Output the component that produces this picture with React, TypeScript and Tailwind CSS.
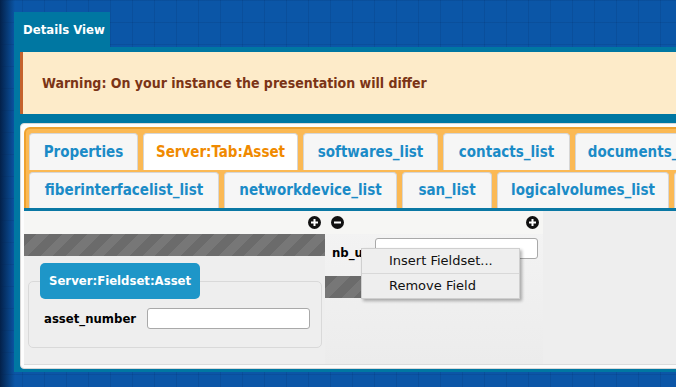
import React from 'react';

const ROW_ONE = [
  { label: 'Properties', w: 109 },
  { label: 'Server:Tab:Asset', w: 155, active: true },
  { label: 'softwares_list', w: 135 },
  { label: 'contacts_list', w: 127 },
  { label: 'documents_list', w: 140 },
];

const ROW_TWO = [
  { label: 'fiberinterfacelist_list', w: 190 },
  { label: 'networkdevice_list', w: 173 },
  { label: 'san_list', w: 90 },
  { label: 'logicalvolumes_list', w: 172 },
  { label: 'physicalinterface_list', w: 180 },
];

function Tab({ label, w, active }: { label: string; w: number; active?: boolean }) {
  return (
    <div
      className={
        'flex h-full shrink-0 items-center justify-center rounded-t-[4px] border border-b-0 border-[#d6d6d6] text-[15px] font-bold ' +
        (active ? 'bg-white text-[#f08a00]' : 'bg-[#f6f6f6] text-[#1b8bc7]')
      }
      style={{ width: w }}
    >
      {label}
    </div>
  );
}

function RoundIcon({ minus }: { minus?: boolean }) {
  return (
    <svg width="13" height="13" viewBox="0 0 13 13" aria-hidden>
      <circle cx="6.5" cy="6.5" r="6.5" fill="#111" />
      <rect x="3" y="5.5" width="7" height="2" fill="#fff" />
      {!minus && <rect x="5.5" y="3" width="2" height="7" fill="#fff" />}
    </svg>
  );
}

const hatch =
  'bg-[repeating-linear-gradient(135deg,#6b6b6b_0px,#6b6b6b_9px,#777777_9px,#777777_18px)]';

export default function App() {
  return (
    <div className="relative h-[387px] w-[676px] overflow-hidden bg-[#0b56a7] bg-[image:linear-gradient(to_right,#03214a,rgba(11,86,167,0)_15px),linear-gradient(rgba(0,25,70,0.12)_1px,transparent_1px),linear-gradient(90deg,rgba(0,25,70,0.12)_1px,transparent_1px)] bg-[size:100%_100%,22px_22px,22px_22px] pl-[14px] pt-[12px] font-['DejaVu_Sans_Condensed','DejaVu_Sans',sans-serif]">
      <div className="flex h-[35px] w-[96px] items-center bg-[#0077a2] pl-[9px] text-[13px] font-bold text-white">
        Details View
      </div>

      <div className="w-[700px] bg-[#0077a2] pb-[3px] pl-[6px] pt-[5px]">
        <div className="flex h-[62px] items-center border-l-[3px] border-[#c4622d] bg-[#fdebc9] pl-[19px] text-[14px] font-bold text-[#7b3416]">
          Warning: On your instance the presentation will differ
        </div>

        <div className="mt-[9px] rounded-[4px] border border-[#d8d8d8] bg-[#fdfdfd] p-[3px]">
          <div className="rounded-t-[6px] border-2 border-b-0 border-[#eea12f] bg-[#fbb954] pl-[3px] pt-[4px]">
            <div className="flex h-[37px] gap-[5px]">
              {ROW_ONE.map((t) => (
                <Tab key={t.label} {...t} />
              ))}
            </div>
            <div className="mt-[2px] flex h-[36px] gap-[5px]">
              {ROW_TWO.map((t) => (
                <Tab key={t.label} {...t} />
              ))}
            </div>
          </div>
          <div className="h-[3px] bg-[#0a78a4]" />

          <div className="flex h-[154px] border-b border-[#dcdcdc] bg-[#eeeeee]">
            <div className="w-[301px]">
              <div className="flex h-[23px] items-center justify-end bg-[#f6f6f4] pr-[4px]">
                <RoundIcon />
              </div>
              <div className={'h-[22px] ' + hatch} />
              <fieldset className="ml-[4px] mt-[7px] w-[293px] rounded-[5px] border border-[#d9d9d9] px-[11px] pb-[18px] pt-[9px]">
                <legend className="flex h-[36px] items-center rounded-[5px] bg-[#1e96c8] px-[9px] text-[13px] font-bold text-white">
                  Server:Fieldset:Asset
                </legend>
                <div className="flex items-center">
                  <span className="ml-[4px] w-[103px] text-[13px] font-bold text-black">asset_number</span>
                  <div className="h-[21px] w-[163px] rounded-[3px] border border-[#a9a9a9] bg-white" />
                </div>
              </fieldset>
            </div>

            <div className="w-[218px] bg-[linear-gradient(#f4f4f4,#ececec)]">
              <div className="flex h-[23px] items-center justify-between bg-[#f6f6f4] pl-[6px] pr-[4px]">
                <RoundIcon minus />
                <RoundIcon />
              </div>
              <div className="mt-[4px] flex items-start">
                <span className="mt-[7px] w-[50px] pl-[7px] text-[13px] font-bold leading-[16px] text-black">nb_u</span>
                <div className="h-[21px] w-[163px] rounded-[3px] border border-[#a9a9a9] bg-white" />
              </div>
              <div className={'mt-[15px] h-[22px] w-[120px] ' + hatch} />
            </div>
          </div>
        </div>
      </div>

      <div className="absolute left-[361px] top-[248px] w-[159px] border border-[#cfcfcf] bg-[#eeeeee] text-[13px] text-[#111] shadow-[2px_2px_3px_rgba(0,0,0,0.3)] font-['DejaVu_Sans',sans-serif]">
        <div className="flex h-[24px] items-center pl-[27px]">Insert Fieldset...</div>
        <div className="h-px bg-[#d8d8d8]" />
        <div className="flex h-[24px] items-center pl-[27px]">Remove Field</div>
      </div>
    </div>
  );
}
